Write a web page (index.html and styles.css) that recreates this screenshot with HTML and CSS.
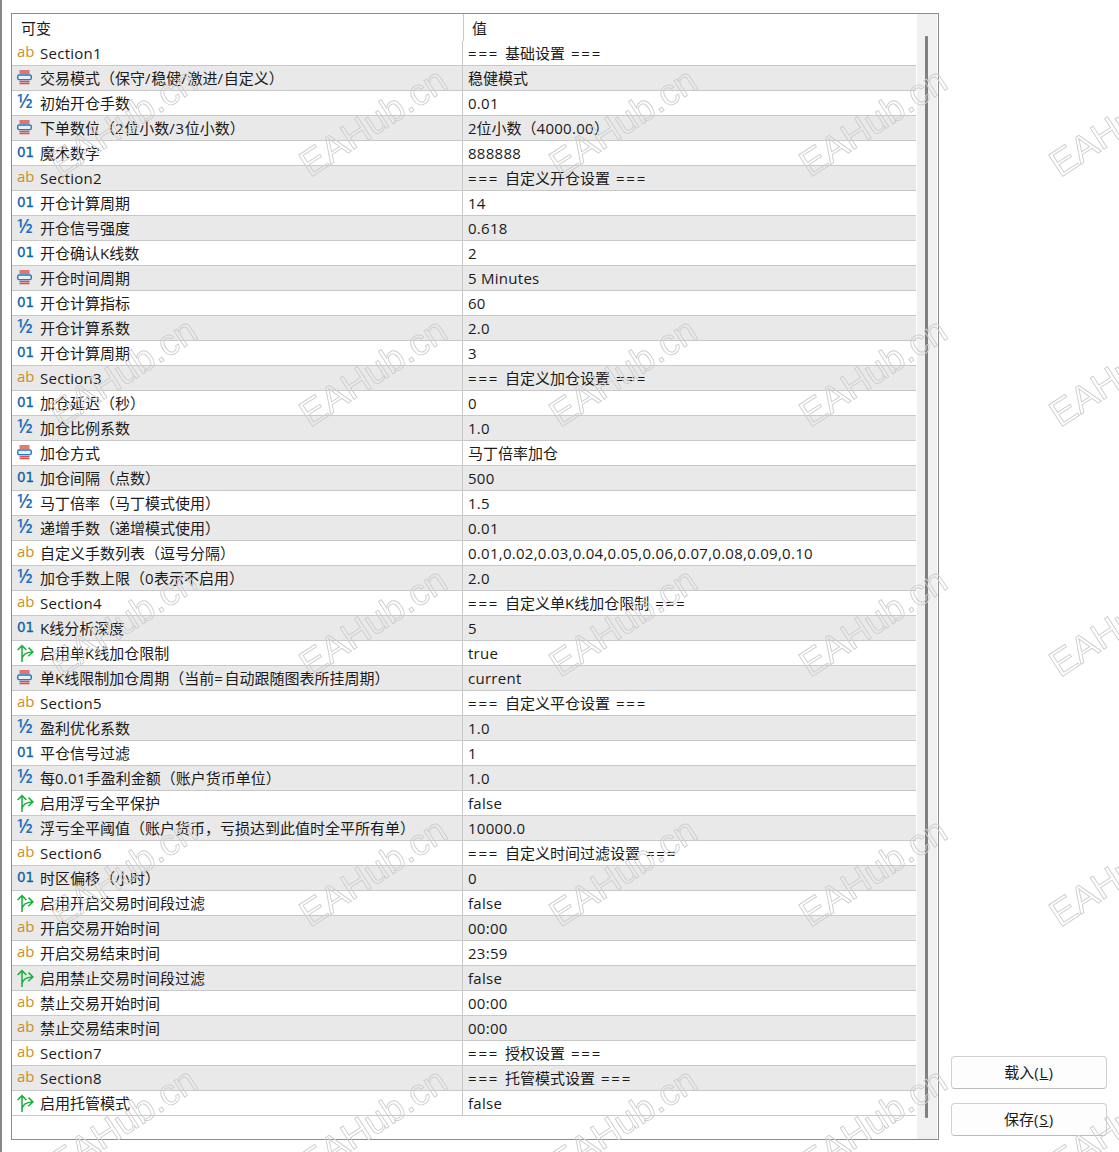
FILE: index.html

```html
<!DOCTYPE html>
<html lang="zh-CN">
<head>
    <meta charset="UTF-8">
    <title>输入参数</title>
    <link rel="stylesheet" href="styles.css">
</head>
<body>
    <svg class="defs" width="0" height="0">
        <symbol id="i-enum" viewBox="0 0 15 16">
            <path d="M2.5 1h10M2.5 3h10M2.5 11.5h10M2.5 13.5h10" stroke="#dd4f48" stroke-width="1.3" fill="none"/>
            <rect x="0.7" y="5" width="13.6" height="4.6" rx="1.6" fill="#e6f1fb" stroke="#1f78c8" stroke-width="1.4"/>
        </symbol>
        <symbol id="i-bool" viewBox="0 0 18 18">
            <path d="M6 18V2M1.6 6L6 1.6 10.4 6M6 15C6.5 11 10 8.4 16.4 8M12.5 3.6L17 8l-4.8 4.2" stroke="#17b03a" stroke-width="1.5" fill="none"/>
        </symbol>
    </svg>

    <main class="panel">
        <div class="list">
            <div class="head">
                <div class="head-name">可变</div>
                <div class="head-value">值</div>
            </div>

            <div class="row"><div class="name"><span class="icon ab">ab</span><span class="en">Section1</span></div><div class="value section"><span class="eq">===</span> 基础设置 <span class="eq">===</span></div></div>
            <div class="row"><div class="name"><svg class="icon"><use href="#i-enum"/></svg>交易模式（保守<span class="sl">/</span>稳健<span class="sl">/</span>激进<span class="sl">/</span>自定义）</div><div class="value">稳健模式</div></div>
            <div class="row"><div class="name"><span class="icon half">½</span>初始开仓手数</div><div class="value en">0.01</div></div>
            <div class="row"><div class="name"><svg class="icon"><use href="#i-enum"/></svg>下单数位（<span class="sl">2</span>位小数<span class="sl">/3</span>位小数）</div><div class="value">2位小数（<span class="en">4000.00</span>）</div></div>
            <div class="row"><div class="name"><span class="icon num">01</span>魔术数字</div><div class="value en">888888</div></div>
            <div class="row"><div class="name"><span class="icon ab">ab</span><span class="en">Section2</span></div><div class="value section"><span class="eq">===</span> 自定义开仓设置 <span class="eq">===</span></div></div>
            <div class="row"><div class="name"><span class="icon num">01</span>开仓计算周期</div><div class="value en">14</div></div>
            <div class="row"><div class="name"><span class="icon half">½</span>开仓信号强度</div><div class="value en">0.618</div></div>
            <div class="row"><div class="name"><span class="icon num">01</span>开仓确认K线数</div><div class="value en">2</div></div>
            <div class="row"><div class="name"><svg class="icon"><use href="#i-enum"/></svg>开仓时间周期</div><div class="value en">5 Minutes</div></div>
            <div class="row"><div class="name"><span class="icon num">01</span>开仓计算指标</div><div class="value en">60</div></div>
            <div class="row"><div class="name"><span class="icon half">½</span>开仓计算系数</div><div class="value en">2.0</div></div>
            <div class="row"><div class="name"><span class="icon num">01</span>开仓计算周期</div><div class="value en">3</div></div>
            <div class="row"><div class="name"><span class="icon ab">ab</span><span class="en">Section3</span></div><div class="value section"><span class="eq">===</span> 自定义加仓设置 <span class="eq">===</span></div></div>
            <div class="row"><div class="name"><span class="icon num">01</span>加仓延迟（秒）</div><div class="value en">0</div></div>
            <div class="row"><div class="name"><span class="icon half">½</span>加仓比例系数</div><div class="value en">1.0</div></div>
            <div class="row"><div class="name"><svg class="icon"><use href="#i-enum"/></svg>加仓方式</div><div class="value">马丁倍率加仓</div></div>
            <div class="row"><div class="name"><span class="icon num">01</span>加仓间隔（点数）</div><div class="value en">500</div></div>
            <div class="row"><div class="name"><span class="icon half">½</span>马丁倍率（马丁模式使用）</div><div class="value en">1.5</div></div>
            <div class="row"><div class="name"><span class="icon half">½</span>递增手数（递增模式使用）</div><div class="value en">0.01</div></div>
            <div class="row"><div class="name"><span class="icon ab">ab</span>自定义手数列表（逗号分隔）</div><div class="value en">0.01,0.02,0.03,0.04,0.05,0.06,0.07,0.08,0.09,0.10</div></div>
            <div class="row"><div class="name"><span class="icon half">½</span>加仓手数上限（<span class="en">0</span>表示不启用）</div><div class="value en">2.0</div></div>
            <div class="row"><div class="name"><span class="icon ab">ab</span><span class="en">Section4</span></div><div class="value section"><span class="eq">===</span> 自定义单K线加仓限制 <span class="eq">===</span></div></div>
            <div class="row"><div class="name"><span class="icon num">01</span>K线分析深度</div><div class="value en">5</div></div>
            <div class="row"><div class="name"><svg class="icon icon-bool"><use href="#i-bool"/></svg>启用单K线加仓限制</div><div class="value en">true</div></div>
            <div class="row"><div class="name"><svg class="icon"><use href="#i-enum"/></svg>单K线限制加仓周期（当前<span class="eq">=</span>自动跟随图表所挂周期）</div><div class="value en">current</div></div>
            <div class="row"><div class="name"><span class="icon ab">ab</span><span class="en">Section5</span></div><div class="value section"><span class="eq">===</span> 自定义平仓设置 <span class="eq">===</span></div></div>
            <div class="row"><div class="name"><span class="icon half">½</span>盈利优化系数</div><div class="value en">1.0</div></div>
            <div class="row"><div class="name"><span class="icon num">01</span>平仓信号过滤</div><div class="value en">1</div></div>
            <div class="row"><div class="name"><span class="icon half">½</span>每<span class="en">0.01</span>手盈利金额（账户货币单位）</div><div class="value en">1.0</div></div>
            <div class="row"><div class="name"><svg class="icon icon-bool"><use href="#i-bool"/></svg>启用浮亏全平保护</div><div class="value en">false</div></div>
            <div class="row"><div class="name"><span class="icon half">½</span>浮亏全平阈值（账户货币，亏损达到此值时全平所有单）</div><div class="value en">10000.0</div></div>
            <div class="row"><div class="name"><span class="icon ab">ab</span><span class="en">Section6</span></div><div class="value section"><span class="eq">===</span> 自定义时间过滤设置 <span class="eq">===</span></div></div>
            <div class="row"><div class="name"><span class="icon num">01</span>时区偏移（小时）</div><div class="value en">0</div></div>
            <div class="row"><div class="name"><svg class="icon icon-bool"><use href="#i-bool"/></svg>启用开启交易时间段过滤</div><div class="value en">false</div></div>
            <div class="row"><div class="name"><span class="icon ab">ab</span>开启交易开始时间</div><div class="value en">00:00</div></div>
            <div class="row"><div class="name"><span class="icon ab">ab</span>开启交易结束时间</div><div class="value en">23:59</div></div>
            <div class="row"><div class="name"><svg class="icon icon-bool"><use href="#i-bool"/></svg>启用禁止交易时间段过滤</div><div class="value en">false</div></div>
            <div class="row"><div class="name"><span class="icon ab">ab</span>禁止交易开始时间</div><div class="value en">00:00</div></div>
            <div class="row"><div class="name"><span class="icon ab">ab</span>禁止交易结束时间</div><div class="value en">00:00</div></div>
            <div class="row"><div class="name"><span class="icon ab">ab</span><span class="en">Section7</span></div><div class="value section"><span class="eq">===</span> 授权设置 <span class="eq">===</span></div></div>
            <div class="row"><div class="name"><span class="icon ab">ab</span><span class="en">Section8</span></div><div class="value section"><span class="eq">===</span> 托管模式设置 <span class="eq">===</span></div></div>
            <div class="row"><div class="name"><svg class="icon icon-bool"><use href="#i-bool"/></svg>启用托管模式</div><div class="value en">false</div></div>
        </div>
        <div class="scrollbar"><div class="thumb"></div></div>
    </main>

    <aside class="actions">
        <button class="btn" type="button">载入<span class="key">(<u>L</u>)</span></button>
        <button class="btn" type="button">保存<span class="key">(<u>S</u>)</span></button>
    </aside>

    <!-- watermark tiles over the whole shot -->
    <svg class="watermark" width="100%" height="100%">
        <defs>
            <pattern id="wm" width="250" height="250" patternUnits="userSpaceOnUse">
                <text class="wm-text" x="60" y="178" transform="rotate(-33 60 178)">EAHub.cn</text>
            </pattern>
        </defs>
        <rect width="100%" height="100%" fill="url(#wm)"/>
    </svg>
</body>
</html>
```

FILE: styles.css

```css
html, body {
    height: 100%;
}
body {
    margin: 0;
    display: flex;
    height: 1152px;
    overflow: hidden;
    box-sizing: border-box;
    border-left: 2px solid #888;
    background: #fff;
    color: #1a1a1a;
    font-family: "Open Sans", "Noto Sans CJK SC", sans-serif;
    font-size: 15px;
}
.defs {
    position: absolute;
}
.panel {
    display: flex;
    width: 928px;
    height: 1127px;
    margin: 13px 0 0 9px;
    box-sizing: border-box;
    border: 1px solid #8c8c90;
}
.list {
    width: 904px;
}
.head {
    display: flex;
    height: 27px;
    line-height: 29px;
}
.head-name {
    width: 442px;
    padding-left: 9px;
    border-right: 1px solid #c8c8c8;
}
.head-value {
    padding-left: 8px;
}
.row {
    display: flex;
    height: 25px;
    box-sizing: border-box;
    border-bottom: 1px solid #c8c8c8;
    line-height: 24px;
}
.row:nth-child(odd) {
    background: #e9e9e9;
}
.name {
    display: flex;
    align-items: center;
    width: 451px;
    box-sizing: border-box;
    padding-left: 5px;
    border-right: 1px solid #c8c8c8;
    white-space: pre;
}
.value {
    padding-left: 5px;
    white-space: nowrap;
}
.section {
    word-spacing: 2px;
}
.en {
    letter-spacing: 0.27px;
}
.eq {
    letter-spacing: 1.8px;
}
.sl {
    letter-spacing: 0.7px;
}
.icon {
    flex: none;
    width: 15px;
    height: 16px;
    margin-right: 8px;
    text-align: center;
}
.icon-bool {
    width: 18px;
    height: 18px;
    margin: 0 6px 0 -1px;
}
.ab,
.num,
.half {
    height: 20px;
    line-height: 18px;
    font-size: 14px;
}
.ab {
    color: #c98f2c;
    font-size: 15px;
    line-height: 16px;
}
.num {
    color: #0f62ac;
    font-family: "DejaVu Sans", sans-serif;
    font-size: 13.5px;
    white-space: nowrap;
    -webkit-text-stroke: 0.3px #0f62ac;
}
.half {
    color: #1f6fc0;
    font-size: 19px;
    font-weight: 600;
    line-height: 17px;
}
.scrollbar {
    width: 20px;
    margin: 0 0 0 1px;
    padding: 22px 0 21px 8px;
    box-sizing: border-box;
    background: #f0f0f0;
}
.thumb {
    width: 3px;
    height: 100%;
    border-radius: 1px;
    background: #808080;
}
.actions {
    display: flex;
    flex-direction: column;
    justify-content: flex-end;
    gap: 14px;
    width: 156px;
    margin-left: 12px;
    padding-bottom: 16px;
}
.btn {
    height: 33px;
    padding: 0 0 2px;
    border: 1px solid #d0d0d0;
    border-bottom-color: #bcbcbc;
    border-radius: 4px;
    background: #fdfdfd;
    color: #1a1a1a;
    font: inherit;
}
.key {
    letter-spacing: 1px;
}
.watermark {
    position: absolute;
    top: 0;
    left: 0;
    pointer-events: none;
}
.wm-text {
    font-family: "Liberation Sans", sans-serif;
    font-size: 37px;
    fill: none;
    stroke: #cdcdcd;
    stroke-width: 0.9;
}
```
